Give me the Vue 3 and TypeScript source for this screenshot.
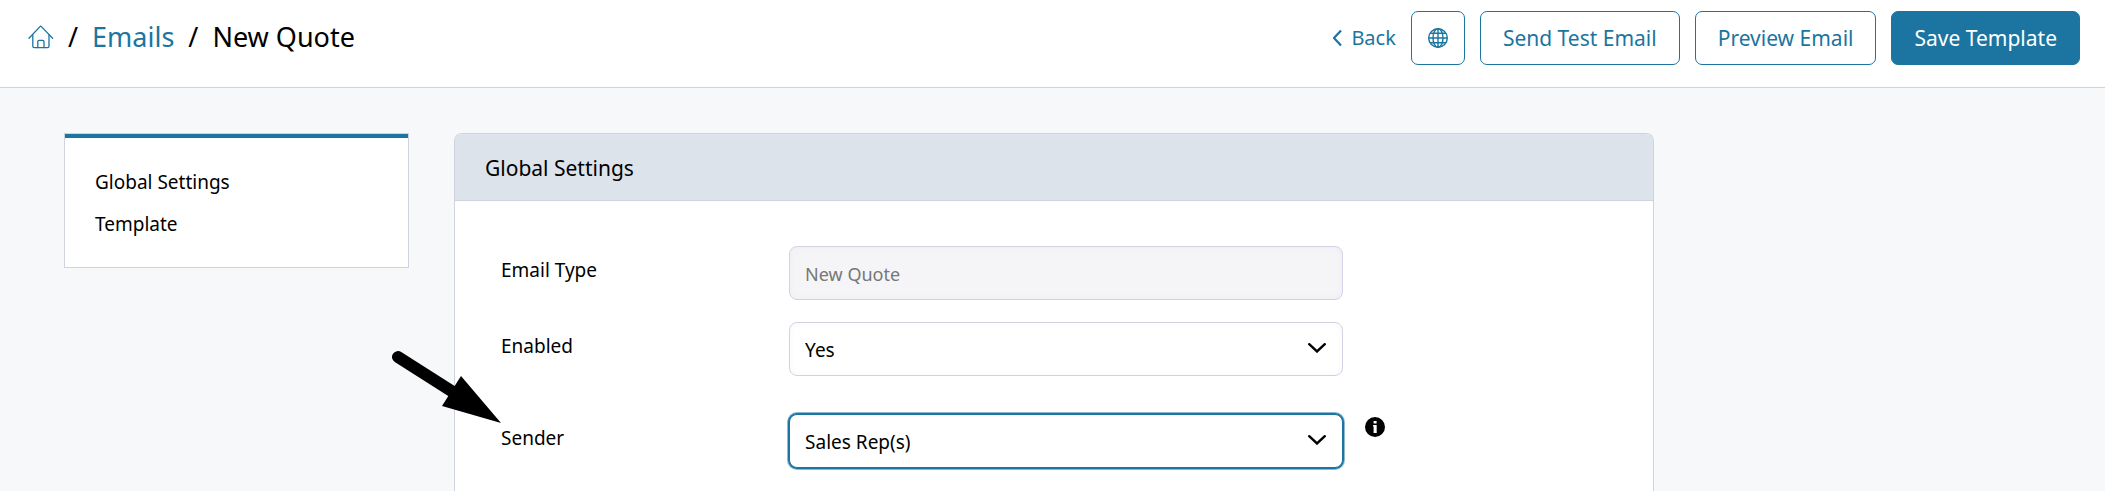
<script setup lang="ts">
import { ref } from 'vue'

const sections = ['Global Settings', 'Template']
const emailType = 'New Quote'
const enabled = ref('Yes')
const sender = ref('Sales Rep(s)')
</script>

<template>
  <div class="page">
    <header class="topbar">
      <nav class="crumbs" aria-label="Breadcrumb">
        <a href="#" class="home" aria-label="Home">
          <svg viewBox="0 0 26 24" width="26" height="24" fill="none" stroke="currentColor" stroke-width="1.3" stroke-linecap="round" stroke-linejoin="round">
            <path d="M1 13.2 12 1.6q.7-.7 1.4 0L24.6 13.2" />
            <path d="M4.8 10v11.3q0 1.4 1.4 1.4h13.4q1.4 0 1.4-1.4V10" />
            <path d="M9.8 22.5v-6q0-1.2 1.2-1.2h3.8q1.2 0 1.2 1.2v6" />
          </svg>
        </a>
        <span class="slash">/</span>
        <a href="#">Emails</a>
        <span class="slash">/</span>
        <span>New Quote</span>
      </nav>
      <div class="actions">
        <a href="#" class="back">
          <svg viewBox="0 0 10 18" width="10" height="18" fill="none" stroke="currentColor" stroke-width="2.2" stroke-linejoin="round">
            <path d="M9 1.5 2 9l7 7.5" />
          </svg>
          Back
        </a>
        <button type="button" class="btn square" aria-label="Language">
          <svg viewBox="0 0 22 22" width="22" height="22" fill="none" stroke="currentColor" stroke-width="1.4">
            <circle cx="11" cy="11" r="9.3" />
            <ellipse cx="11" cy="11" rx="5" ry="9.3" />
            <path d="M11 1.7v18.6M1.7 11h18.6M3.2 6.3h15.6M3.2 15.7h15.6" />
          </svg>
        </button>
        <button type="button" class="btn">Send Test Email</button>
        <button type="button" class="btn">Preview Email</button>
        <button type="button" class="btn primary">Save Template</button>
      </div>
    </header>

    <div class="content">
      <nav class="sidebar" aria-label="Sections">
        <a v-for="s in sections" :key="s" href="#">{{ s }}</a>
      </nav>

      <main class="card">
        <h2>Global Settings</h2>
        <form class="form" @submit.prevent>
          <div class="row">
            <label for="email-type">Email Type</label>
            <input id="email-type" class="control" type="text" :value="emailType" disabled />
          </div>
          <div class="row">
            <label for="enabled">Enabled</label>
            <div class="select">
              <select id="enabled" v-model="enabled" class="control">
                <option>Yes</option>
                <option>No</option>
              </select>
              <svg class="chevron" viewBox="0 0 18 10" width="18" height="10"><path d="M1.2 1.2 9 8.5l7.8-7.3" /></svg>
            </div>
          </div>
          <div class="row sender">
            <label for="sender">Sender</label>
            <div class="select">
              <select id="sender" v-model="sender" class="control active">
                <option>Sales Rep(s)</option>
                <option>Store</option>
              </select>
              <svg class="chevron" viewBox="0 0 18 10" width="18" height="10"><path d="M1.2 1.2 9 8.5l7.8-7.3" /></svg>
            </div>
            <svg class="info" viewBox="0 0 20 20" width="20" height="20" role="img" aria-label="Information">
              <circle cx="10" cy="10" r="10" />
              <path d="M8.6 4h3v2.4h-3zM8.1 8h3.6v8H8.6V9.6h-.5z" fill="#fff" />
            </svg>
            <svg class="pointer" viewBox="0 0 110 74" width="110" height="74" aria-hidden="true">
              <path d="M7 7 62 42" stroke="#000" stroke-width="12" stroke-linecap="round" />
              <path d="M70 26 110 73 51 56z" />
            </svg>
          </div>
        </form>
      </main>
    </div>
  </div>
</template>

<style>
body {
  margin: 0;
  background: #f7f8fa;
}
</style>

<style scoped>
.page {
  height: 100vh;
  display: flex;
  flex-direction: column;
  overflow: hidden;
  background: #f7f8fa;
  color: #000;
  font-family: "Noto Sans", sans-serif;
  font-size: 19px;
  line-height: 28px;
}
.page * {
  box-sizing: border-box;
}
a {
  color: #1b75a0;
  text-decoration: none;
}
.topbar {
  flex: none;
  display: flex;
  justify-content: space-between;
  align-items: flex-start;
  padding: 11px 25px 22px 28px;
  background: #fff;
  border-bottom: 1px solid #cfd3e0;
}
.crumbs {
  display: flex;
  align-items: center;
  height: 52px;
  font-size: 27px;
}
.home {
  display: flex;
}
.slash {
  margin: 0 14px;
}
.actions {
  display: flex;
  align-items: center;
  gap: 15px;
  font-size: 21px;
}
.back {
  display: flex;
  align-items: center;
  gap: 9px;
  font-size: 20px;
}
.btn {
  height: 54px;
  padding: 0 22px;
  border: 1px solid #1b75a0;
  border-radius: 7px;
  background: #fff;
  color: #1b75a0;
  font: inherit;
}
.square {
  display: flex;
  align-items: center;
  justify-content: center;
  width: 54px;
  padding: 0;
}
.primary {
  background: #1b75a0;
  color: #fff;
}
.content {
  flex: 1;
  display: flex;
  align-items: flex-start;
  gap: 45px;
  padding: 45px 64px 0;
}
.sidebar {
  flex: 0 0 345px;
  display: flex;
  flex-direction: column;
  gap: 14px;
  padding: 34px 30px 29px;
  background: #fff;
  border: 1px solid #cfd3e0;
  box-shadow: inset 0 4px #1b75a0;
}
.sidebar a {
  color: #000;
}
.card {
  flex: 0 1 1200px;
  align-self: stretch;
  background: #fff;
  border: 1px solid #cfd3e0;
  border-bottom: 0;
  border-radius: 8px 8px 0 0;
}
.card h2 {
  margin: 0;
  padding: 20px 30px 18px;
  background: #dde3ea;
  border-bottom: 1px solid #cfd3e0;
  border-radius: 7px 7px 0 0;
  font-size: 21px;
  line-height: 28px;
  font-weight: 400;
}
.form {
  display: flex;
  flex-direction: column;
  gap: 22px;
  padding: 45px 44px 45px 46px;
}
.row {
  position: relative;
  display: grid;
  grid-template-columns: 26% 50% auto;
  align-items: start;
  justify-content: start;
}
.row label {
  padding-top: 10px;
}
.sender {
  margin-top: 16px;
}
.control {
  appearance: none;
  display: block;
  width: 100%;
  height: 54px;
  margin: 0;
  padding: 2px 15px 0;
  border: 1px solid #d1d3e4;
  border-radius: 8px;
  background: #fff;
  box-shadow: inset 0 0 8px #00000008;
  color: #000;
  font: inherit;
  outline: none;
}
.control:disabled {
  background: #f5f5f8;
  color: #777;
  font-size: 18px;
}
.control.active {
  border-color: #1b75a0;
  box-shadow: 0 0 0 1px #1b75a0, 0 0 0 2px #8dbacf;
}
.select {
  position: relative;
}
.chevron {
  position: absolute;
  right: 17px;
  top: 21px;
  fill: none;
  stroke: #000;
  stroke-width: 2.4;
  stroke-linecap: round;
  pointer-events: none;
}
.info {
  margin: 3px 0 0 22px;
}
.pointer {
  position: absolute;
  left: -110px;
  top: -64px;
}
</style>
